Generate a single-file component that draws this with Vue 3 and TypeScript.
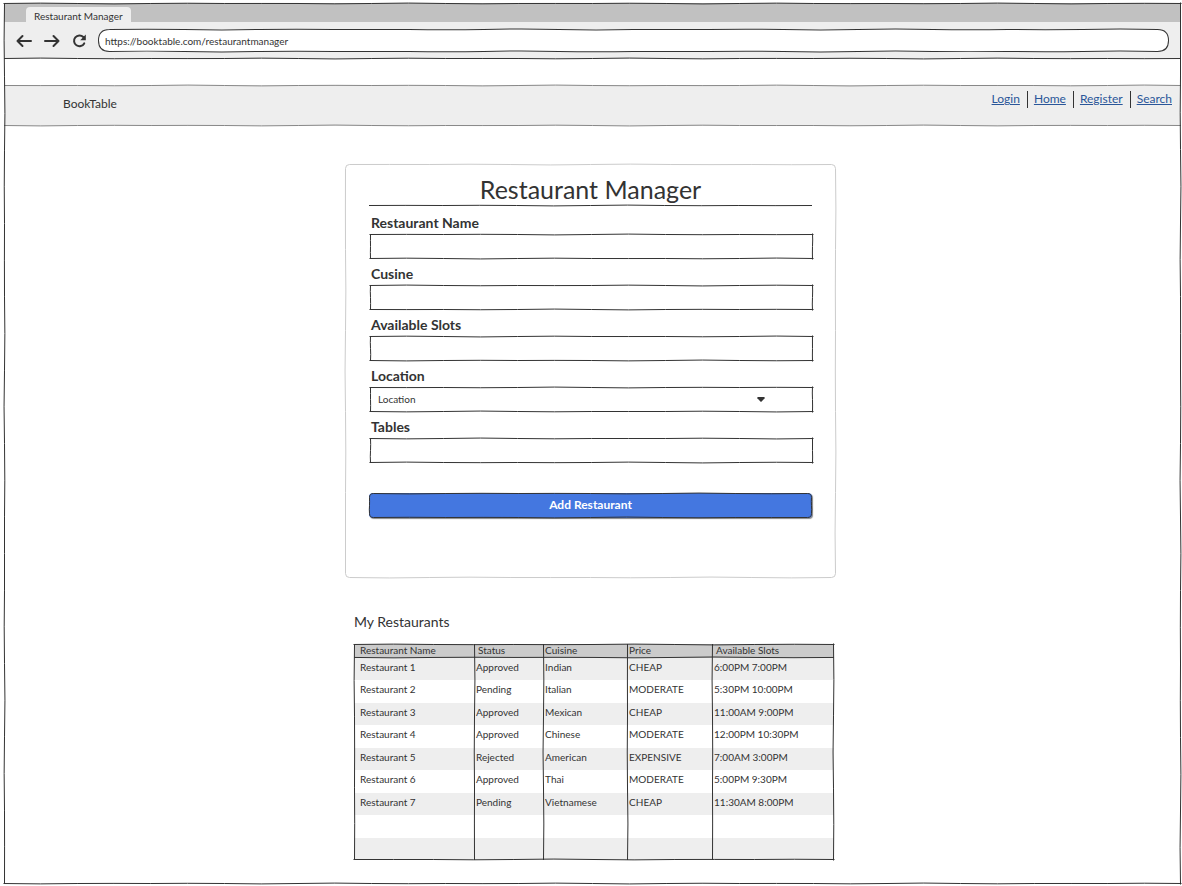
<script setup lang="ts">
import { h, ref, type FunctionalComponent } from 'vue'

type Point = [number, number]

interface SketchProps {
  w: number
  h: number
  r?: number
  seed?: number
  shape?: 'box' | 'top' | 'bottom'
  columns?: number[]
  rows?: number[]
}

// Hand-drawn stroke between two points: a chain of shallow curves.
function stroke(from: Point, to: Point, seed: number, move = true): string {
  const dx = to[0] - from[0]
  const dy = to[1] - from[1]
  const length = Math.hypot(dx, dy)
  const steps = Math.max(2, Math.round(length / 75))
  let d = move ? `M${from[0]} ${from[1]}` : `L${from[0]} ${from[1]}`
  for (let i = 1; i <= steps; i++) {
    const end = i / steps
    const mid = (i - 0.5) / steps
    const bend = Math.sin(seed * 7.3 + i * 2.4) * (length > 60 ? 0.9 : 0.4)
    const mx = from[0] + dx * mid - (dy / length) * bend
    const my = from[1] + dy * mid + (dx / length) * bend
    d += `Q${mx.toFixed(2)} ${my.toFixed(2)} ${(from[0] + dx * end).toFixed(2)} ${(from[1] + dy * end).toFixed(2)}`
  }
  return d
}

function outline(p: SketchProps): string {
  const r = p.r ?? 0
  const s = p.seed ?? 1
  const x = 0.5
  const y = 0.5
  const X = p.w - 0.5
  const Y = p.h - 0.5
  if (p.shape === 'top') return stroke([0, y], [p.w, y], s)
  if (p.shape === 'bottom') return stroke([0, Y], [p.w, Y], s)
  if (r === 0) {
    return (
      stroke([x - 1, y], [X + 1, y], s) +
      stroke([X, y - 1], [X, Y + 1], s + 1) +
      stroke([x - 1, Y], [X + 1, Y], s + 2) +
      stroke([x, y], [x, Y], s + 3)
    )
  }
  return (
    stroke([x + r, y], [X - r, y], s) +
    `Q${X} ${y} ${X} ${y + r}` +
    (Y - r > y + r ? stroke([X, y + r], [X, Y - r], s + 1, false) : '') +
    `Q${X} ${Y} ${X - r} ${Y}` +
    stroke([X - r, Y], [x + r, Y], s + 2, false) +
    `Q${x} ${Y} ${x} ${Y - r}` +
    (Y - r > y + r ? stroke([x, Y - r], [x, y + r], s + 3, false) : '') +
    `Q${x} ${y} ${x + r} ${y}`
  )
}

const Sketch: FunctionalComponent<SketchProps> = (p) => {
  let d = outline(p)
  for (const [i, c] of (p.columns ?? []).entries()) d += stroke([c + 0.5, 0], [c + 0.5, p.h], i + 2)
  for (const [i, y] of (p.rows ?? []).entries()) d += stroke([0, y + 0.5], [p.w, y + 0.5], i + 5)
  return h(
    'svg',
    { viewBox: `0 0 ${p.w} ${p.h}`, preserveAspectRatio: 'none', 'aria-hidden': 'true' },
    [h('path', { d, 'vector-effect': 'non-scaling-stroke' })],
  )
}
Sketch.props = ['w', 'h', 'r', 'seed', 'shape', 'columns', 'rows']

const address = ref('https://booktable.com/restaurantmanager')
const location = ref('Location')

const links = ['Login', 'Home', 'Register', 'Search']

const form = ref({ name: '', cuisine: '', slots: '', tables: '' })

const headings = ['Restaurant Name', 'Status', 'Cuisine', 'Price', 'Available Slots']
const restaurants = [
  ['Restaurant 1', 'Approved', 'Indian', 'CHEAP', '6:00PM 7:00PM'],
  ['Restaurant 2', 'Pending', 'Italian', 'MODERATE', '5:30PM 10:00PM'],
  ['Restaurant 3', 'Approved', 'Mexican', 'CHEAP', '11:00AM 9:00PM'],
  ['Restaurant 4', 'Approved', 'Chinese', 'MODERATE', '12:00PM 10:30PM'],
  ['Restaurant 5', 'Rejected', 'American', 'EXPENSIVE', '7:00AM 3:00PM'],
  ['Restaurant 6', 'Approved', 'Thai', 'MODERATE', '5:00PM 9:30PM'],
  ['Restaurant 7', 'Pending', 'Vietnamese', 'CHEAP', '11:30AM 8:00PM'],
  ['', '', '', '', ''],
  ['', '', '', '', ''],
]
</script>

<template>
  <div class="window">
    <div class="tabs">
      <div class="tab">Restaurant Manager</div>
    </div>
    <div class="toolbar">
      <button class="tool" type="button" aria-label="Back">
        <svg viewBox="0 0 16 14"><path d="M15 7H1.500M6.500 2L1.500 7L6.500 12" /></svg>
      </button>
      <button class="tool" type="button" aria-label="Forward">
        <svg viewBox="0 0 16 14"><path d="M1 7H14.500M9.500 2L14.500 7L9.500 12" /></svg>
      </button>
      <button class="tool reload" type="button" aria-label="Reload">
        <svg viewBox="0 0 16 14">
          <path d="M11.300 3A5.400 5.400 0 1 0 12.200 9.400" />
          <path class="solid" d="M13.800 0.600V6.200H8.200Z" />
        </svg>
      </button>
      <div class="address">
        <input v-model="address" type="text" aria-label="Address" />
        <Sketch class="sketch" :w="1072" :h="23" :r="11" :seed="3" />
      </div>
      <Sketch class="sketch" :w="1176" :h="37" shape="bottom" :seed="2" />
    </div>

    <header class="site-header">
      <div class="brand">BookTable</div>
      <nav class="links">
        <a v-for="link in links" :key="link" href="#">{{ link }}</a>
      </nav>
      <Sketch class="sketch mid" :w="1176" :h="41" shape="top" :seed="4" />
      <Sketch class="sketch mid" :w="1176" :h="41" shape="bottom" :seed="5" />
    </header>

    <main class="content">
      <form class="card" @submit.prevent>
        <h1>
          Restaurant Manager
          <Sketch class="sketch" :w="442" :h="32" shape="bottom" :seed="1" />
        </h1>
        <div class="field">
          <label for="name">Restaurant Name</label>
          <div class="control">
            <input id="name" v-model="form.name" type="text" />
            <Sketch class="sketch" :w="442" :h="25" :seed="1" />
          </div>
        </div>
        <div class="field">
          <label for="cuisine">Cusine</label>
          <div class="control">
            <input id="cuisine" v-model="form.cuisine" type="text" />
            <Sketch class="sketch" :w="442" :h="25" :seed="2" />
          </div>
        </div>
        <div class="field">
          <label for="slots">Available Slots</label>
          <div class="control">
            <input id="slots" v-model="form.slots" type="text" />
            <Sketch class="sketch" :w="442" :h="25" :seed="3" />
          </div>
        </div>
        <div class="field">
          <label for="location">Location</label>
          <div class="control">
            <select id="location" v-model="location">
              <option>Location</option>
            </select>
            <svg class="caret" viewBox="0 0 8 5" aria-hidden="true">
              <path d="M1 0H7Q8 0 7.600 1.200L4.600 4.600Q4 5 3.400 4.600L0.400 1.200Q0 0 1 0Z" />
            </svg>
            <Sketch class="sketch" :w="442" :h="25" :seed="4" />
          </div>
        </div>
        <div class="field">
          <label for="tables">Tables</label>
          <div class="control">
            <input id="tables" v-model="form.tables" type="text" />
            <Sketch class="sketch" :w="442" :h="25" :seed="6" />
          </div>
        </div>
        <button class="submit" type="submit">
          Add Restaurant
          <Sketch class="sketch" :w="441" :h="25" :r="4" :seed="5" />
        </button>
        <Sketch class="sketch light" :w="491" :h="414" :r="4" :seed="7" />
      </form>

      <section class="listing">
        <h2>My Restaurants</h2>
        <div class="grid">
          <table>
            <colgroup>
              <col class="c-name" />
              <col class="c-status" />
              <col class="c-cuisine" />
              <col class="c-price" />
              <col class="c-slots" />
            </colgroup>
            <thead>
              <tr>
                <th v-for="heading in headings" :key="heading" scope="col">{{ heading }}</th>
              </tr>
            </thead>
            <tbody>
              <tr v-for="(row, i) in restaurants" :key="i">
                <td v-for="(cell, j) in row" :key="j">{{ cell }}</td>
              </tr>
            </tbody>
          </table>
          <Sketch
            class="sketch"
            :w="480"
            :h="217"
            :columns="[120, 189, 273, 358]"
            :rows="[13]"
            :seed="8"
          />
        </div>
      </section>
    </main>
    <Sketch class="sketch" :w="1177" :h="882" :seed="9" />
  </div>
</template>

<style>
body {
  margin: 0;
  background: #fff;
}
</style>

<style scoped>
.window {
  position: relative;
  box-sizing: border-box;
  margin: 3px 1px 2px 4px;
  padding-bottom: 24px;
  color: #333;
  background: #fff;
  font: 10px/14px Lato, 'Open Sans', sans-serif;
}

.window * {
  box-sizing: border-box;
}

.sketch {
  position: absolute;
  inset: 0;
  width: 100%;
  height: 100%;
  overflow: visible;
  fill: none;
  stroke: #333;
  stroke-width: 1px;
  pointer-events: none;
}

.sketch.mid {
  stroke: #888;
}

.sketch.light {
  stroke: #ccc;
}

.tabs {
  display: flex;
  align-items: flex-end;
  height: 19px;
  padding-left: 22px;
  background: #c1c1c1;
}

.tab {
  height: 15px;
  padding: 0 8px;
  border-radius: 4px 4px 0 0;
  background: #eee;
  line-height: 18px;
}

.toolbar {
  position: relative;
  display: flex;
  align-items: center;
  height: 37px;
  padding: 0 12px;
  background: #eee;
}

.tool {
  width: 16px;
  height: 14px;
  margin-right: 12px;
  padding: 0;
  border: 0;
  background: none;
}

.tool.reload {
  margin-right: 10px;
}

.tool svg {
  display: block;
  width: 16px;
  height: 14px;
  fill: none;
  stroke: #333;
  stroke-width: 2px;
  stroke-linecap: round;
  stroke-linejoin: round;
}

.tool .solid {
  fill: #333;
  stroke: none;
}

.address {
  position: relative;
  flex: 1;
  height: 23px;
}

.address input {
  display: block;
  width: 100%;
  height: 23px;
  padding: 0 7px;
  border: 0;
  border-radius: 12px;
  background: #fff;
  color: inherit;
  font: inherit;
}

.site-header {
  position: relative;
  display: flex;
  justify-content: space-between;
  height: 41px;
  margin-top: 26px;
  padding: 6px 9px 0 59px;
  background: #eee;
  font-size: 12px;
}

.brand {
  line-height: 26px;
}

.links {
  display: flex;
  height: 17px;
}

.links a {
  padding: 0 7px 0 6px;
  border-left: 1px solid #333;
  color: #2a5699;
  line-height: 16px;
}

.links a:first-child {
  border-left: 0;
}

.links a:last-child {
  padding-right: 0;
}

.content {
  width: min(495px, 100%);
  margin: 38px auto 0;
  padding-right: 4px;
}

.card {
  position: relative;
  padding: 10px 24px 60px;
}

h1 {
  position: relative;
  margin: 0 0 2px;
  padding-bottom: 2px;
  font-size: 25px;
  font-weight: 400;
  line-height: 30px;
  text-align: center;
}

.field {
  margin: 0 -1px 0 1px;
}

label {
  display: block;
  height: 26px;
  padding: 4px 0 0 1px;
  font-size: 14px;
  font-weight: 700;
  line-height: 22px;
}

.control {
  position: relative;
  height: 25px;
}

.control input,
.control select {
  display: block;
  width: 100%;
  height: 25px;
  padding: 0 8px 2px;
  border: 0;
  border-radius: 0;
  appearance: none;
  background: #fff;
  color: inherit;
  font: inherit;
}

.caret {
  position: absolute;
  top: 10px;
  right: 48px;
  width: 8px;
  height: 5px;
  fill: #333;
  pointer-events: none;
}

.submit {
  position: relative;
  display: block;
  width: 100%;
  height: 25px;
  margin-top: 30px;
  padding: 0 0 2px;
  border: 0;
  border-radius: 4px;
  background: #4477e0;
  box-shadow: 1px 1px 1px #888;
  color: #fff;
  font: 700 12px/20px Lato, 'Open Sans', sans-serif;
}

.listing {
  padding: 33px 2px 0 9px;
}

h2 {
  margin: 0 0 11px;
  font-size: 14px;
  font-weight: 400;
  line-height: 22px;
}

.grid {
  position: relative;
}

table {
  width: 100%;
  border-collapse: collapse;
  table-layout: fixed;
}

.c-name {
  width: 25%;
}

.c-status {
  width: 14.4%;
}

.c-cuisine {
  width: 17.5%;
}

.c-price {
  width: 17.7%;
}

.c-slots {
  width: 25.4%;
}

th,
td {
  padding: 0 0 0 2px;
  font-weight: 400;
  text-align: left;
  vertical-align: top;
  white-space: nowrap;
}

th {
  height: 14px;
  line-height: 12px;
  background: #cbcbcb;
}

td {
  height: 22px;
  line-height: 19px;
}

th:first-child,
td:first-child {
  padding-left: 6px;
}

th:nth-child(2),
th:last-child {
  padding-left: 4px;
}

tbody tr:nth-child(odd) {
  background: #eee;
}

tbody tr:nth-child(even) td {
  height: 23px;
}
</style>
